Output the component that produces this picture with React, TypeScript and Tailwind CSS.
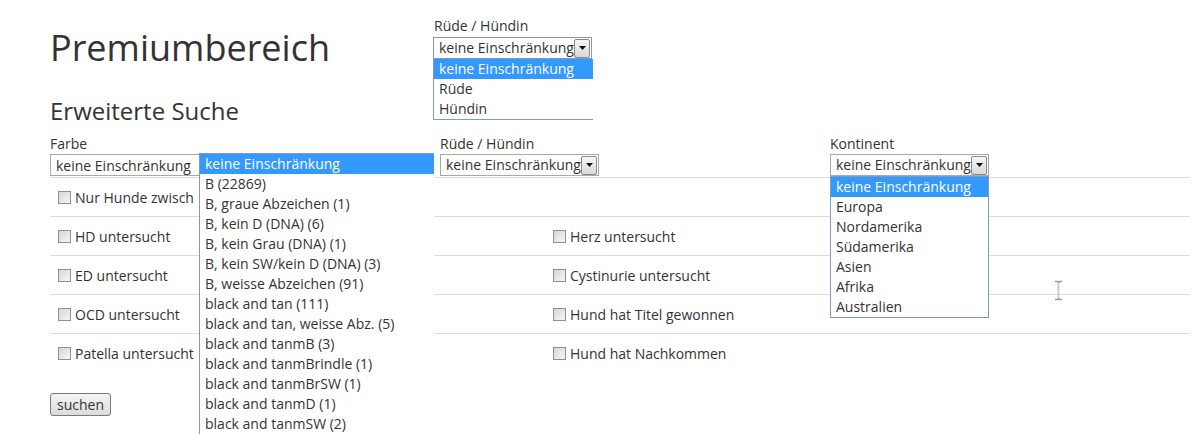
import React from "react";

const farben = [
  "keine Einschränkung",
  "B (22869)",
  "B, graue Abzeichen (1)",
  "B, kein D (DNA) (6)",
  "B, kein Grau (DNA) (1)",
  "B, kein SW/kein D (DNA) (3)",
  "B, weisse Abzeichen (91)",
  "black and tan (111)",
  "black and tan, weisse Abz. (5)",
  "black and tanmB (3)",
  "black and tanmBrindle (1)",
  "black and tanmBrSW (1)",
  "black and tanmD (1)",
  "black and tanmSW (2)",
];

const kontinente = ["keine Einschränkung", "Europa", "Nordamerika", "Südamerika", "Asien", "Afrika", "Australien"];

// the first label is hidden behind the open Farbe list in the screenshot
const rows: [string, string | null][] = [
  ["Nur Hunde zwisch", null],
  ["HD untersucht", "Herz untersucht"],
  ["ED untersucht", "Cystinurie untersucht"],
  ["OCD untersucht", "Hund hat Titel gewonnen"],
  ["Patella untersucht", "Hund hat Nachkommen"],
];

function ArrowButton() {
  return (
    <div className="flex h-[19px] w-[16px] items-center justify-center rounded-[2px] border border-[#8a8a8a] bg-linear-to-b from-[#f6f6f6] to-[#d9d9d9]">
      <svg width="7" height="4" viewBox="0 0 7 4">
        <path d="M0 0h7L3.5 4z" fill="#111" />
      </svg>
    </div>
  );
}

function Select({ focused = false }: { focused?: boolean }) {
  return (
    <div
      className={`flex h-[22px] w-[159px] items-center justify-between border bg-white pl-[5px] pr-[1px] ${
        focused ? "border-[#7f9db9]" : "border-[#a9a9a9]"
      }`}
    >
      <span className="whitespace-nowrap leading-[20px]">keine Einschränkung</span>
      <ArrowButton />
    </div>
  );
}

function Checkbox() {
  return <div className="h-[13px] w-[13px] shrink-0 border border-[#8f8f8f] bg-linear-to-br from-[#d6d6d6] to-[#f6f6f6]" />;
}

function Option({ label, active }: { label: string; active?: boolean }) {
  return (
    <div className={`h-[20px] whitespace-nowrap pl-[5px] leading-[20px] ${active ? "bg-[#3399ff] text-white" : ""}`}>{label}</div>
  );
}

export default function App() {
  return (
    <div className="relative h-[435px] w-[1193px] overflow-hidden bg-white font-['Open_Sans',sans-serif] text-[14px] text-[#333]">
      <div className="px-[50px]">
        <h1 className="mt-[26px] h-[44px] text-[36px] leading-[44px] font-normal">Premiumbereich</h1>
        <h2 className="mt-[27px] h-[28px] text-[24px] leading-[28px] font-normal">Erweiterte Suche</h2>

        <div className="mt-[9px] grid grid-cols-[390px_390px_1fr]">
          <div>
            <div className="h-[20px] leading-[20px]">Farbe</div>
            <div className="flex h-[22px] w-[150px] items-center border border-[#a9a9a9] pl-[5px]">keine Einschränkung</div>
          </div>
          <div>
            <div className="h-[20px] leading-[20px]">Rüde / Hündin</div>
            <Select />
          </div>
          <div>
            <div className="h-[20px] leading-[20px]">Kontinent</div>
            <Select />
          </div>
        </div>

        <div className="mt-[1px] w-[1140px]">
          {rows.map(([left, right]) => (
            <div key={left} className="grid h-[39px] grid-cols-[495px_1fr] border-t border-[#dddddd]">
              <div className="flex items-center gap-[4px] pl-[8px]">
                <Checkbox />
                <span className="whitespace-nowrap">{left}</span>
              </div>
              {right && (
                <div className="flex items-center gap-[4px] pl-[8px]">
                  <Checkbox />
                  <span>{right}</span>
                </div>
              )}
            </div>
          ))}
        </div>

        <button className="mt-[21px] h-[23px] rounded-[3px] border border-[#7a7a7a] bg-linear-to-b from-[#f4f4f4] to-[#dcdcdc] px-[6px] text-[14px] leading-[20px] text-[#333]">
          suchen
        </button>
      </div>

      {/* open list: Farbe */}
      <div className="absolute left-[199px] top-[153px] w-[235px] border-l border-t border-[#7f9db9] bg-white">
        {farben.map((f, i) => (
          <Option key={f} label={f} active={i === 0} />
        ))}
      </div>

      {/* open list: Kontinent */}
      <div className="absolute left-[830px] top-[176px] w-[159px] border border-[#7f9db9] bg-white">
        {kontinente.map((k, i) => (
          <Option key={k} label={k} active={i === 0} />
        ))}
      </div>

      {/* separate snapshot of the Rüde / Hündin dropdown */}
      <div className="absolute left-[433px] top-[16px] w-[160px] bg-white">
        <div className="h-[20px] pl-[1px] leading-[20px]">Rüde / Hündin</div>
        <div className="mt-[1px]">
          <Select focused />
        </div>
        <div className="border-b border-l border-[#7f9db9]">
          <Option label="keine Einschränkung" active />
          <Option label="Rüde" />
          <Option label="Hündin" />
        </div>
      </div>

      {/* text cursor */}
      <svg className="absolute left-[1054px] top-[280px]" width="9" height="21" viewBox="0 0 9 21">
        <path d="M1 1.5h2.5l1 1 1-1H8M4.5 2.5v16M1 19.5h2.5l1-1 1 1H8" fill="none" stroke="#9a9a9a" strokeWidth="1.6" />
        <path d="M4.5 3v15" stroke="#fff" strokeWidth="0.6" />
      </svg>
    </div>
  );
}
